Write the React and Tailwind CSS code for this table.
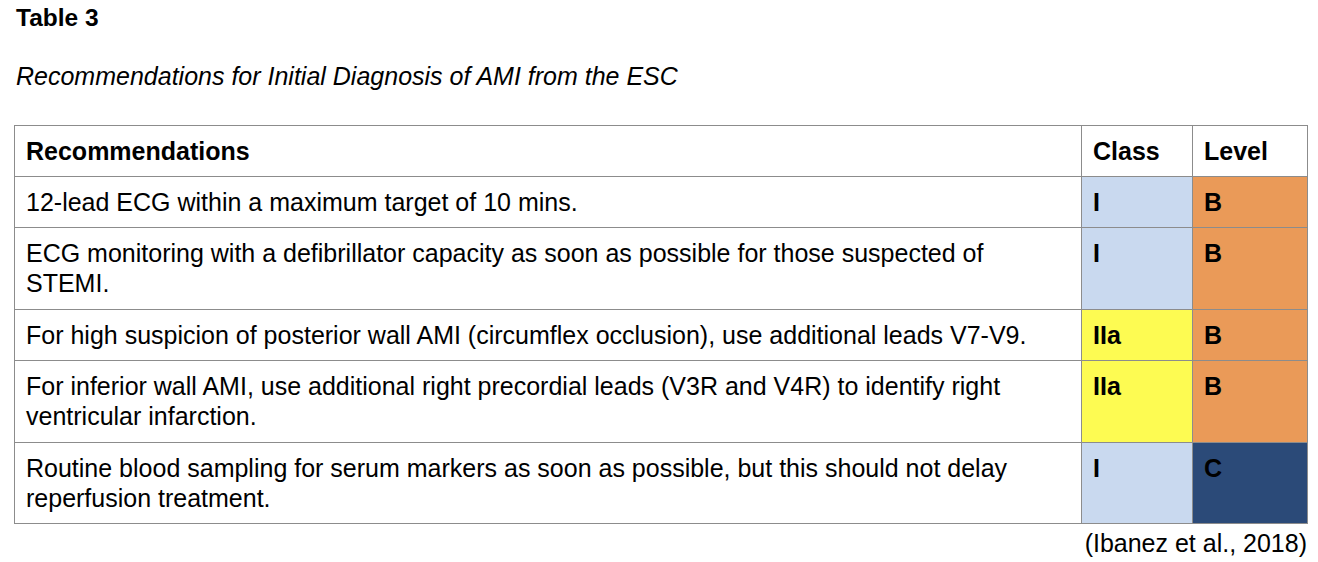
import React from 'react'

const rows = [
  {
    text: '12-lead ECG within a maximum target of 10 mins.',
    cls: 'I',
    level: 'B',
    clsBg: 'bg-[#c9d9ef]',
    levelBg: 'bg-[#ea9a58]',
  },
  {
    text: 'ECG monitoring with a defibrillator capacity as soon as possible for those suspected of STEMI.',
    cls: 'I',
    level: 'B',
    clsBg: 'bg-[#c9d9ef]',
    levelBg: 'bg-[#ea9a58]',
  },
  {
    text: 'For high suspicion of posterior wall AMI (circumflex occlusion), use additional leads V7-V9.',
    cls: 'IIa',
    level: 'B',
    clsBg: 'bg-[#fdfb52]',
    levelBg: 'bg-[#ea9a58]',
  },
  {
    text: 'For inferior wall AMI, use additional right precordial leads (V3R and V4R) to identify right ventricular infarction.',
    cls: 'IIa',
    level: 'B',
    clsBg: 'bg-[#fdfb52]',
    levelBg: 'bg-[#ea9a58]',
  },
  {
    text: 'Routine blood sampling for serum markers as soon as possible, but this should not delay reperfusion treatment.',
    cls: 'I',
    level: 'C',
    clsBg: 'bg-[#c9d9ef]',
    levelBg: 'bg-[#2b4a78]',
  },
]

export default function App() {
  return (
    <div className="w-[1318px] h-[562px] bg-white text-black px-[14px] pt-[3px] font-['Liberation_Sans',Arial,sans-serif] text-[25px] leading-[30px]">
      <h1 className="font-bold pl-[2px] text-[24.5px]">Table 3</h1>
      <p className="italic pl-[2px] mt-[28px]">Recommendations for Initial Diagnosis of AMI from the ESC</p>

      <table className="mt-[34px] w-[1293px] table-fixed border-collapse">
        <colgroup>
          <col className="w-[1067px]" />
          <col className="w-[111px]" />
          <col className="w-[115px]" />
        </colgroup>
        <thead>
          <tr>
            <th className="border border-[#8c8c8c] text-left font-bold px-[11px] py-[10px] align-top">Recommendations</th>
            <th className="border border-[#8c8c8c] text-left font-bold px-[11px] py-[10px] align-top">Class</th>
            <th className="border border-[#8c8c8c] text-left font-bold px-[11px] py-[10px] align-top">Level</th>
          </tr>
        </thead>
        <tbody>
          {rows.map((r, i) => (
            <tr key={i}>
              <td className="border border-[#8c8c8c] px-[11px] pt-[10px] pb-[10.4px] align-top">{r.text}</td>
              <td className={`border border-[#8c8c8c] px-[11px] pt-[10px] pb-[10.4px] align-top font-bold ${r.clsBg}`}>{r.cls}</td>
              <td className={`border border-[#8c8c8c] px-[11px] pt-[10px] pb-[10.4px] align-top font-bold ${r.levelBg}`}>{r.level}</td>
            </tr>
          ))}
        </tbody>
      </table>

      <p className="text-right w-[1293px] mt-[4px]">(Ibanez et al., 2018)</p>
    </div>
  )
}
